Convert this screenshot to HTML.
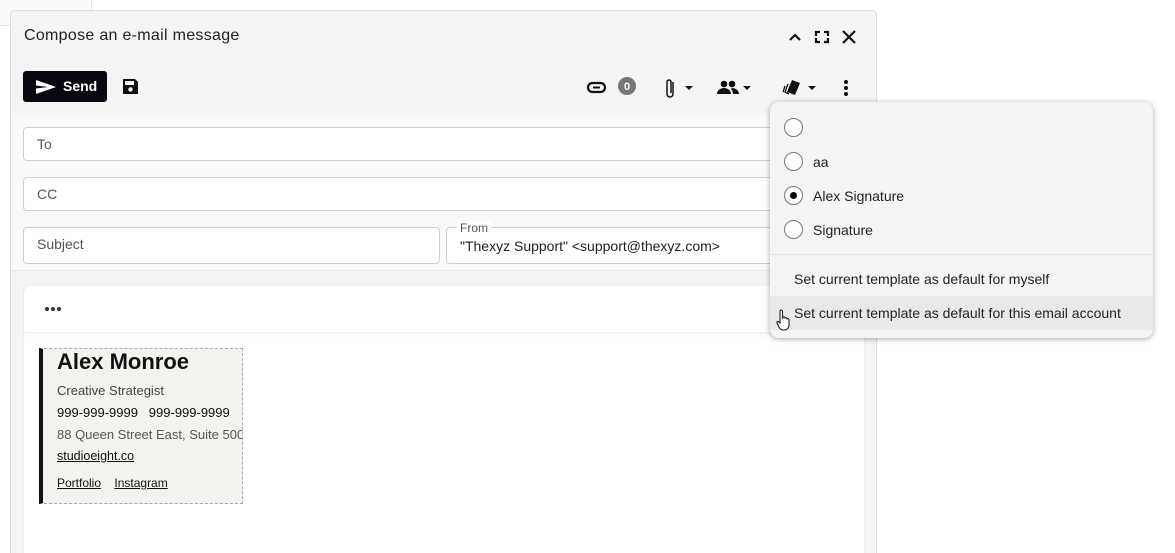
<!DOCTYPE html>
<html><head><style>
*{box-sizing:border-box;margin:0;padding:0}
html,body{width:1175px;height:553px;overflow:hidden}
body{background:#fff;font-family:"Liberation Sans","DejaVu Sans",sans-serif;position:relative;color:#222}
.abs{position:absolute}
.dlg{left:10px;top:10px;width:867px;height:543px;background:#f4f4f4;border:1px solid #dcdcdc;border-bottom:none;border-radius:5px 5px 0 0;overflow:hidden}
.title{left:13px;top:16px;font-size:16px;color:#222;letter-spacing:.3px}
.send{left:12px;top:60px;width:84px;height:31px;background:#080810;border-radius:3px;color:#fff;font-weight:bold;font-size:14px}
.fields{left:0;top:102px;width:867px;height:158px;background:#f9f9f9;border-bottom:1px solid #e6e6e6}
.inp{position:absolute;background:#fff;border:1px solid #cfcfcf;border-radius:4px;font-size:14px;color:#555;padding-left:13px;line-height:32px}
.card{left:12px;top:274px;width:842px;height:269px;background:#fff;border:1px solid #eee;border-bottom:none;border-radius:8px 8px 0 0}
.menu{left:770px;top:102px;width:383px;height:236px;background:#f4f4f4;border-radius:9px;box-shadow:0 1px 6px rgba(0,0,0,.35)}
.radio{position:absolute;left:14px;width:19px;height:19px;border:1.5px solid #777;border-radius:50%;background:#fff}
.rl{position:absolute;left:43px;font-size:14px;color:#222}
.sig{left:39px;top:348px;width:204px;height:156px;background:#f3f2ee;border:1px dashed #aaa;border-left:4px solid #111;font-family:"Liberation Sans",sans-serif;overflow:hidden}
.sig div{position:absolute;left:14px;white-space:nowrap}
</style></head><body>
<div class="abs" style="left:0;top:0;width:92px;height:26px;border-right:1px solid #e2e2e2;border-bottom:1px solid #e2e2e2;background:#fafafa"></div>
<div class="abs dlg">
  <div class="abs title">Compose an e-mail message</div>
  <svg class="abs" style="left:775px;top:17px" width="70" height="18" viewBox="0 0 70 18">
    <path d="M4 12 L9 7 L14 12" fill="none" stroke="#111" stroke-width="2.2"/>
    <path d="M30 8V4h4M38 4h4v4M42 10v4h-4M34 14h-4v-4" fill="none" stroke="#111" stroke-width="2.2"/>
    <path d="M57 3l12 12M69 3L57 15" stroke="#111" stroke-width="2.2"/>
  </svg>
  <div class="abs send">
    <svg class="abs" style="left:12px;top:8px" width="22" height="16" viewBox="0 0 22 16"><path d="M1 1L21 8L1 15L1 9.5L13 8L1 6.5Z" fill="#fff"/></svg>
    <span class="abs" style="left:40px;top:7px">Send</span>
  </div>
  <svg class="abs" style="left:111px;top:67px" width="17" height="17" viewBox="0 0 17 17"><path d="M1 1h12l3 3v12H1z" fill="#111"/><rect x="3" y="3" width="9" height="4" fill="#f4f4f4"/><circle cx="8.5" cy="11.5" r="2.2" fill="#f4f4f4"/></svg>
  <svg class="abs" style="left:575px;top:65px" width="280" height="24" viewBox="0 0 280 24">
    <rect x="2" y="7" width="17" height="9" rx="4.5" fill="none" stroke="#111" stroke-width="2.2"/>
    <line x1="7" y1="11.5" x2="14" y2="11.5" stroke="#f4f4f4" stroke-width="3"/><line x1="7" y1="11.5" x2="14" y2="11.5" stroke="#111" stroke-width="2"/>
    <circle cx="41" cy="10" r="9" fill="#777"/><text x="41" y="14" font-size="11" font-weight="bold" fill="#fff" text-anchor="middle" font-family="Liberation Sans">0</text>
    <path d="M87 6v12a3 3 0 0 1-6 0V6a2 2 0 0 1 4 0v11" fill="none" stroke="#111" stroke-width="1.5"/>
    <path d="M99 10h8l-4 4z" fill="#111"/>
    <circle cx="138" cy="8" r="3.3" fill="#111"/><circle cx="146" cy="8" r="3.3" fill="#111"/>
    <path d="M131 18c0-4 4-6 7-6s7 2 7 6zM146 12c3 0 7 2 7 6h-6c0-2-1-4-2-5z" fill="#111"/>
    <path d="M157 10h8l-4 4z" fill="#111"/>
    <path d="M206 4l8 3-5 12-8-3z" fill="#111"/><path d="M202 8l-3 8 4 2M199 10l-2 6" fill="none" stroke="#111" stroke-width="1.3"/>
    <path d="M222 10h8l-4 4z" fill="#111"/>
    <circle cx="260" cy="6" r="2" fill="#111"/><circle cx="260" cy="12" r="2" fill="#111"/><circle cx="260" cy="18" r="2" fill="#111"/>
  </svg>
  <div class="abs fields">
    <div class="inp" style="left:12px;top:14px;width:830px;height:34px">To</div>
    <div class="inp" style="left:12px;top:64px;width:830px;height:34px">CC</div>
    <div class="inp" style="left:12px;top:114px;width:417px;height:37px;line-height:33px">Subject</div>
    <div class="inp" style="left:435px;top:114px;width:420px;height:37px;color:#222;line-height:36px">"Thexyz Support" &lt;support@thexyz.com&gt;</div>
    <div class="abs" style="left:446px;top:108px;font-size:12px;color:#555;background:#fff;padding:0 3px">From</div>
  </div>
  <div class="abs card">
    <div class="abs" style="left:0;top:0;width:840px;height:47px;border-bottom:1px solid #eee;box-shadow:0 2px 4px rgba(0,0,0,.04)"></div>
    <svg class="abs" style="left:20px;top:20px" width="18" height="6"><circle cx="3" cy="3" r="2" fill="#333"/><circle cx="9" cy="3" r="2" fill="#333"/><circle cx="15" cy="3" r="2" fill="#333"/></svg>
  </div>
</div>
<div class="abs sig">
  <div style="top:0px;font-size:22px;font-weight:bold;color:#111">Alex Monroe</div>
  <div style="top:34px;font-size:13px;color:#444">Creative Strategist</div>
  <div style="top:56px;font-size:13px;color:#111">999-999-9999&nbsp;&nbsp;&nbsp;999-999-9999</div>
  <div style="top:78px;font-size:13px;color:#555">88 Queen Street East, Suite 500</div>
  <div style="top:100px;font-size:12.5px;color:#111;text-decoration:underline">studioeight.co</div>
  <div style="top:127px;font-size:12px;color:#111"><u>Portfolio</u>&nbsp;&nbsp;&nbsp;&nbsp;<u>Instagram</u></div>
</div>
<div class="abs menu">
  <div class="radio" style="top:16px"></div>
  <div class="radio" style="top:50px"></div><div class="rl" style="top:52px">aa</div>
  <div class="radio" style="top:84px"><div style="position:absolute;left:4.5px;top:4.5px;width:7px;height:7px;border-radius:50%;background:#000"></div></div><div class="rl" style="top:86px">Alex Signature</div>
  <div class="radio" style="top:118px"></div><div class="rl" style="top:120px">Signature</div>
  <div class="abs" style="left:0;top:152px;width:383px;border-top:1px solid #e2e2e2"></div>
  <div class="abs" style="left:24px;top:169px;font-size:14px;color:#222">Set current template as default for myself</div>
  <div class="abs" style="left:0;top:194px;width:383px;height:34px;background:#e9e9e9"></div>
  <div class="abs" style="left:24px;top:203px;font-size:14px;color:#222">Set current template as default for this email account</div>
  <svg class="abs" style="left:6px;top:206px" width="18" height="24" viewBox="0 0 18 24"><path d="M5 2c1 0 1.5.6 1.5 1.5V11l.5-2c1-.5 2 0 2 1 .8-.6 2-.2 2 .8.8-.5 2 0 2 1V17c0 3-2 5-5 5H7c-2 0-3-1-4-3L1 15c-.5-1 .5-2 1.5-1.3L4 15V3.5C4 2.6 4.3 2 5 2z" fill="#fff" stroke="#222" stroke-width="1.1"/></svg>
</div>
</body></html>
